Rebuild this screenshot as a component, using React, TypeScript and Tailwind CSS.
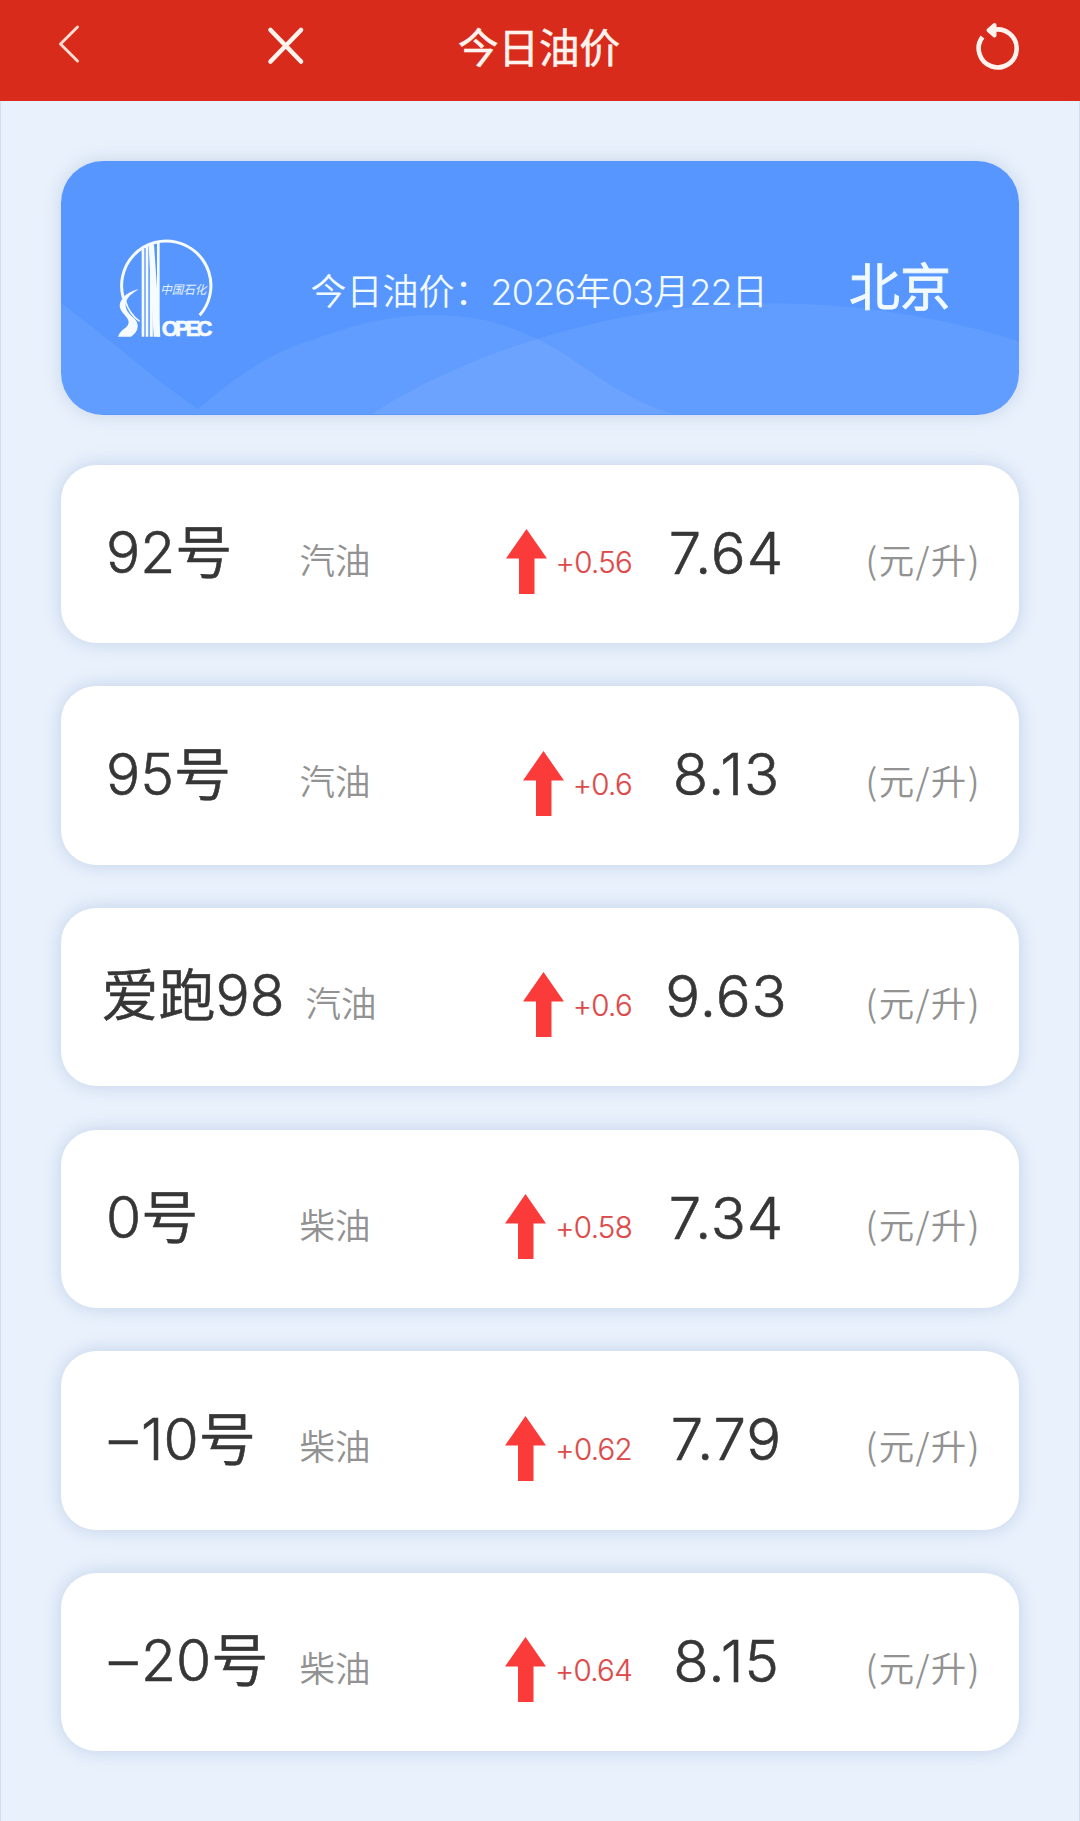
type Fuel = { grade: string; kind: string; change: string; price: string; wide?: boolean };

const fuels: Fuel[] = [
  { grade: "92号", kind: "汽油", change: "+0.56", price: "7.64" },
  { grade: "95号", kind: "汽油", change: "+0.6", price: "8.13" },
  { grade: "爱跑98", kind: "汽油", change: "+0.6", price: "9.63", wide: true },
  { grade: "0号", kind: "柴油", change: "+0.58", price: "7.34" },
  { grade: "–10号", kind: "柴油", change: "+0.62", price: "7.79" },
  { grade: "–20号", kind: "柴油", change: "+0.64", price: "8.15" },
];

function Header() {
  return (
    <header className="flex h-[100.5px] items-start bg-[#d82b1b] text-[#fff3ee]">
      <svg className="ml-[55px] mt-[22px] h-[44px] w-[26px]" viewBox="0 0 26 44" fill="none" stroke="#fbdcd2" strokeWidth="3" strokeLinecap="round" strokeLinejoin="round">
        <path d="M22.5 5 5.5 22 22.5 39" />
      </svg>
      <svg className="ml-[185px] mt-[26px] h-[40px] w-[40px]" viewBox="0 0 40 40" fill="none" stroke="currentColor" strokeWidth="4.6" strokeLinecap="round">
        <path d="M4.5 4 35 35.5M35 4 4.5 35.5" />
      </svg>
      <h1 className="ml-[152px] mt-[18.5px] text-[40.5px] font-normal leading-[60px] whitespace-nowrap [-webkit-text-stroke:0.6px_currentColor]">今日油价</h1>
      <svg className="ml-auto mr-[60px] mt-[20px] h-[54px] w-[50px]" viewBox="0 0 50 54" fill="none" stroke="currentColor" strokeWidth="4.6" strokeLinejoin="round">
        <path d="M12.5 17A19 19 0 1 0 23 10" />
        <path d="M24.5 5 18.5 10.2 24.5 15.5Z" strokeWidth="4" strokeLinecap="round" fill="currentColor" />
      </svg>
    </header>
  );
}

function SinopecLogo() {
  return (
    <svg className="h-[99px] w-[96px] overflow-visible" viewBox="52 54 288 297" fill="none" stroke="#f6fbff">
      <path d="M71 234A134 134 0 1 1 300 286" strokeWidth="9" />
      <path d="M130 86V350M142 78V350" strokeWidth="8" />
      <path d="M155 72V350" strokeWidth="9" />
      <path d="M176 66V350" strokeWidth="8" />
      <path d="M147 74H163L182 350H162Z" fill="#f6fbff" stroke="none" />
      <path d="M117 208C78 216 54 244 62 266C68 282 92 296 86 312C82 326 64 326 55 350H94C116 336 120 314 106 298C92 284 76 272 78 252C80 232 98 220 117 208Z" fill="#f6fbff" stroke="none" />
      <path d="M76 240C84 266 98 290 120 304" strokeWidth="5" />
      <text x="182" y="222" fontSize="36" textLength="138" lengthAdjust="spacingAndGlyphs" fill="#e4f1ff" stroke="none" className="italic">中国石化</text>
      <text x="186" y="348" fontSize="65" fontWeight="700" textLength="152" lengthAdjust="spacing" fill="#f6fbff" stroke="#f6fbff" strokeWidth="2" className="font-['Liberation_Sans_Narrow','Liberation_Sans',sans-serif]">OPEC</text>
    </svg>
  );
}

function Banner() {
  return (
    <section className="relative h-[253.5px] overflow-hidden rounded-[42px] bg-[#5696fe] text-[#f1faff]">
      <svg className="absolute inset-0 h-full w-full" viewBox="0 0 958 253" fill="#ffffff" fillOpacity="0.065">
        <path d="M0 142C45 174 90 216 137 248C165 224 205 192 250 179C300 160 340 153 376 154C420 154 450 165 479 179C525 202 560 240 615 253H0Z" />
        <path d="M311 253C350 226 420 194 479 177C550 155 620 143 700 142C790 141 880 155 958 180V253Z" />
      </svg>
      <div className="relative flex items-start">
        <div className="ml-[56px] mt-[76.5px]"><SinopecLogo /></div>
        <p className="ml-[97.5px] mt-[104px] text-[36px] font-[350] leading-[54px] whitespace-nowrap">
          今日油价：<span className="tracking-[-0.9px]">2026</span>年<span className="tracking-[-0.9px]">03</span>月<span className="tracking-[-0.9px]">22</span>日
        </p>
        <p className="ml-auto mr-[68px] mt-[88.5px] text-[51px] font-normal leading-[75px] whitespace-nowrap [-webkit-text-stroke:0.8px_currentColor]">北京</p>
      </div>
    </section>
  );
}

function UpArrow() {
  return (
    <svg className="mr-[9px] mt-[64.5px] h-[65px] w-[41px] shrink-0" viewBox="0 0 41 65" fill="#fb3a3a">
      <path d="M20.5 0 41 29.5H28.5V65H13V29.5H0Z" />
    </svg>
  );
}

function Grade({ text }: { text: string }) {
  const negative = text.startsWith("–");
  return (
    <p className="mt-[46.5px] text-[57px] leading-[84px] text-[#363636] [-webkit-text-stroke:0.6px_currentColor]">
      {negative && <span className="ml-[3px] mr-[3.5px]">–</span>}
      {negative ? text.slice(1) : text}
    </p>
  );
}

function FuelCard({ fuel }: { fuel: Fuel }) {
  return (
    <li className="flex h-[178.5px] items-start rounded-[35px] bg-white whitespace-nowrap font-[350] shadow-[0_0_18px_rgba(110,140,190,0.32)]">
      <div className={fuel.wide ? "ml-[40.5px] w-[204px]" : "ml-[45px] w-[193.5px]"}>
        <Grade text={fuel.grade} />
      </div>
      <p className="mt-[70px] w-[90px] text-[35.5px] leading-[54px] text-[#929292]">{fuel.kind}</p>
      <div className={fuel.wide ? "flex w-[236.5px] justify-end" : "flex w-[242.5px] justify-end"}>
        <UpArrow />
        <p className="mt-[75.5px] text-[29.5px] leading-[44px] tracking-[-0.7px] text-[#dd4a4a] [-webkit-text-stroke:0.2px_currentColor]">{fuel.change}</p>
      </div>
      <p className="mt-[46px] w-[189px] text-center text-[58px] leading-[84px] tracking-[1px] text-[#363636] [-webkit-text-stroke:0.6px_currentColor]">{fuel.price}</p>
      <p className="ml-[44.5px] mt-[67px] font-['Noto_Sans_CJK_SC',sans-serif] text-[35.5px] leading-[54px] tracking-[1.4px] text-[#929292]">(元/升)</p>
    </li>
  );
}

export default function App() {
  return (
    <div className="h-[1821px] overflow-hidden bg-[#e9f1fc] font-['Inter','Noto_Sans_CJK_SC',sans-serif]">
      <Header />
      <main className="h-[1721px] border-x border-[#d3deee] px-[60px] pt-[60.5px]">
        <div className="rounded-[42px] shadow-[0_0_18px_rgba(110,140,180,0.28)]">
          <Banner />
        </div>
        <ul className="mt-[50px] flex flex-col gap-[43.2px]">
          {fuels.map((fuel) => (
            <FuelCard key={fuel.grade} fuel={fuel} />
          ))}
        </ul>
      </main>
    </div>
  );
}
